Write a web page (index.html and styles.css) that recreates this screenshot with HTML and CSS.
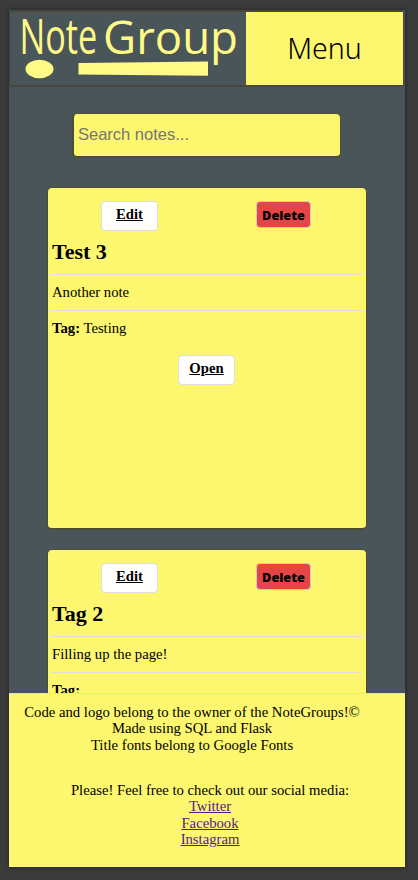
FILE: index.html
```html
<!DOCTYPE html>
<html lang="en">
<head>
<meta charset="utf-8">
<title>NoteGroup</title>
<link rel="stylesheet" href="styles.css">
</head>
<body>
<div class="page">
  <header class="header">
    <a class="logo">
      <svg width="236" height="73" viewBox="0 0 236 73" fill="#fffa85">
        <g class="logo-text">
          <text transform="translate(9.500 42) scale(.74 1)" font-size="50" textLength="105" lengthAdjust="spacingAndGlyphs">Note</text>
          <text transform="translate(93 42.300)" font-size="45.500" textLength="135" lengthAdjust="spacingAndGlyphs">Group</text>
        </g>
        <ellipse cx="29.500" cy="57" rx="14" ry="9.200"/>
        <path d="M68.500 51L198 49.500V63.700L68.500 62.500Z"/>
      </svg>
    </a>
    <a class="menu">Menu</a>
  </header>
  <main class="notes">
    <input class="search" type="text" placeholder="Search notes...">
    <article class="card">
      <div class="actions"><a class="btn">Edit</a><button class="delete">Delete</button></div>
      <h2>Test 3</h2>
      <p>Another note</p>
      <p><b>Tag:</b> Testing</p>
      <a class="btn open">Open</a>
    </article>
    <article class="card">
      <div class="actions"><a class="btn">Edit</a><button class="delete">Delete</button></div>
      <h2>Tag 2</h2>
      <p>Filling up the page!</p>
      <p><b>Tag:</b></p>
    </article>
  </main>
  <footer class="footer">
    <p class="credits">Code and logo belong to the owner of the NoteGroups!©<br>Made using SQL and Flask<br>Title fonts belong to Google Fonts</p>
    <p class="social">Please! Feel free to check out our social media:<br><a href="#">Twitter</a><br><a href="#">Facebook</a><br><a href="#">Instagram</a></p>
  </footer>
</div>
</body>
</html>
```
FILE: styles.css
```css
* { box-sizing: border-box; }
body {
  margin: 0;
  padding: 10px 13px 13px 9px;
  height: 880px;
  overflow: hidden;
  background: #3b3b3b;
  color: #000;
  font: 14.7px/16.4px "Liberation Serif", serif;
}
h2, p { margin: 0; }
.page {
  display: flex;
  flex-direction: column;
  height: 857px;
  background: #4a555a;
  box-shadow: 0 0 4px #222;
}
.header {
  display: flex;
  flex: none;
  height: 77px;
  margin-right: 1px;
  border: 1px solid #48483a;
  border-top-width: 2px;
  border-bottom-width: 2px;
  border-radius: 4px;
}
.logo { width: 236px; height: 73px; }
.logo svg { display: block; overflow: visible; }
.logo-text { font-family: "Open Sans", sans-serif; font-weight: 400; }
.menu {
  display: flex;
  align-items: center;
  justify-content: center;
  width: 157px;
  height: 73px;
  padding-bottom: 2px;
  background: #fdf66f;
  font: 300 28.5px "Noto Sans", sans-serif;
}
.notes {
  flex: 1;
  min-height: 0;
  overflow: hidden;
  padding: 26px 37px 0 38px;
}
.search {
  display: block;
  width: 269px;
  height: 45px;
  margin: 0 0 29px 25px;
  padding: 1px 4px 3px;
  border: 2px solid #4e4d31;
  border-width: 1px 1px 2px 2px;
  border-radius: 5px;
  background: #fdf66f;
  font: 16.5px "Liberation Sans", sans-serif;
}
.search::placeholder { color: #757575; }
.card {
  width: 320px;
  height: 343px;
  margin-bottom: 19px;
  padding: 13px 5px 0 4px;
  border: 2px solid #4e4d31;
  border-width: 1px 1px 2px 1px;
  border-radius: 5px;
  background: #fdf66f;
}
.actions {
  display: flex;
  justify-content: space-between;
  padding: 0 50px 0 49px;
  height: 38px;
}
.btn {
  display: block;
  width: 57px;
  height: 30px;
  padding-top: 4px;
  border: 1px solid #ddd;
  border-radius: 4px;
  background: #fff;
  font-weight: bold;
  text-align: center;
  text-decoration: underline;
}
.delete {
  width: 55px;
  height: 27px;
  padding: 1px 0 0;
  border: 1px solid #ccc;
  border-radius: 4px;
  background: #e54545;
  color: #000;
  font: 800 12.7px "Open Sans", sans-serif;
}
.card h2 { font-size: 22px; line-height: 26px; height: 36px; border-bottom: 1px solid #dedede; }
.card p { height: 36px; padding-top: 9px; }
.card h2 + p { border-bottom: 1px solid #dedede; }
.open { margin: 8px 0 0 126px; }
.footer {
  flex: none;
  height: 174px;
  padding-top: 10px;
  border-top: 1px solid #dedede;
  background: #fdf66f;
  text-align: center;
}
.credits { width: 366px; height: 78px; }
.social { padding-left: 6px; }
.social a { color: #551a8b; }
```
